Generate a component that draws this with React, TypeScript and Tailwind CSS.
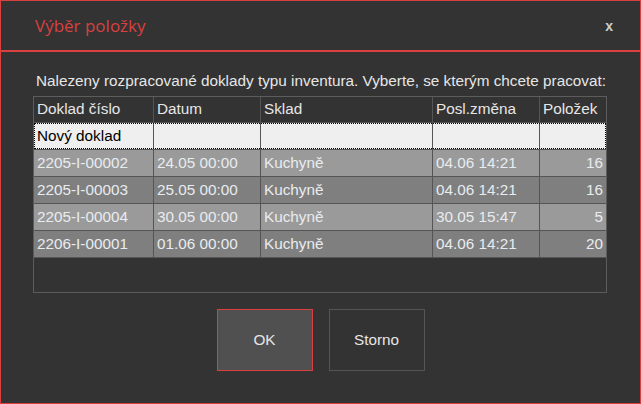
import React from 'react';

type Row = { cislo: string; datum: string; sklad: string; zmena: string; polozek: string };

const ROWS: Row[] = [
  { cislo: '2205-I-00002', datum: '24.05 00:00', sklad: 'Kuchyně', zmena: '04.06 14:21', polozek: '16' },
  { cislo: '2205-I-00003', datum: '25.05 00:00', sklad: 'Kuchyně', zmena: '04.06 14:21', polozek: '16' },
  { cislo: '2205-I-00004', datum: '30.05 00:00', sklad: 'Kuchyně', zmena: '30.05 15:47', polozek: '5' },
  { cislo: '2206-I-00001', datum: '01.06 00:00', sklad: 'Kuchyně', zmena: '04.06 14:21', polozek: '20' },
];

const GRID = 'grid grid-cols-[120px_107px_172px_107px_1fr]';
const CELL = 'flex items-center px-[3px] border-r border-[#555555] whitespace-nowrap overflow-hidden';
const LAST = 'flex items-center px-[3px] whitespace-nowrap overflow-hidden';

export default function App() {
  return (
    <div
      className="w-[641px] h-[404px] bg-[#333333] border border-[#d9403f] flex flex-col text-[#e6e6e6]"
      style={{ fontFamily: '"Liberation Sans", Arial, sans-serif' }}
    >
      {/* title bar */}
      <div className="h-[51px] shrink-0 flex items-center justify-between pl-[34px] pr-[27px] border-b-2 border-[#d9403f]">
        <span
          className="text-[17px] text-[#d9403f]"
          style={{ fontFamily: '"Open Sans", "Noto Sans", sans-serif' }}
        >
          Výběr položky
        </span>
        <span className="text-[14px] font-bold text-[#cfcfcf] leading-none">x</span>
      </div>

      <div className="flex flex-col px-[32px] pt-[20px]">
        <div className="text-[15.3px] leading-[17px] pl-[3px] whitespace-nowrap">
          Nalezeny rozpracované doklady typu inventura. Vyberte, se kterým chcete pracovat:
        </div>

        {/* table */}
        <div className="mt-[7px] w-[574px] h-[197px] border border-[#5c5c5c] flex flex-col text-[15.3px]">
          <div className={`${GRID} h-[26px] border-b border-[#555555] bg-[#333333] text-[#e6e6e6]`}>
            <div className={CELL}>Doklad číslo</div>
            <div className={CELL}>Datum</div>
            <div className={CELL}>Sklad</div>
            <div className={CELL}>Posl.změna</div>
            <div className={LAST}>Položek</div>
          </div>

          <div className="relative">
            <div className={`${GRID} h-[27px] border-b border-[#555555] bg-[#efefef] text-black`}>
              <div className={CELL}>Nový doklad</div>
              <div className={CELL}></div>
              <div className={CELL}></div>
              <div className={CELL}></div>
              <div className={LAST}></div>
            </div>
            <div className="absolute inset-x-0 top-0 h-[26px] border border-dotted border-black pointer-events-none" />
          </div>

          {ROWS.map((r, i) => (
            <div
              key={r.cislo}
              className={`${GRID} h-[27px] border-b border-[#555555] text-[#e8ecf0] ${
                i % 2 === 0 ? 'bg-[#9a9a9a]' : 'bg-[#7f7f7f]'
              }`}
            >
              <div className={CELL}>{r.cislo}</div>
              <div className={CELL}>{r.datum}</div>
              <div className={CELL}>{r.sklad}</div>
              <div className={CELL}>{r.zmena}</div>
              <div className={`${LAST} justify-end`}>{r.polozek}</div>
            </div>
          ))}
        </div>

        {/* buttons */}
        <div className="mt-[16px] flex justify-center gap-[16px] text-[15.3px]">
          <button className="w-[96px] h-[62px] bg-[#505050] border border-[#d9403f] text-[#e6e6e6]">
            OK
          </button>
          <button className="w-[96px] h-[62px] bg-[#333333] border border-[#555555] text-[#e6e6e6]">
            Storno
          </button>
        </div>
      </div>
    </div>
  );
}
